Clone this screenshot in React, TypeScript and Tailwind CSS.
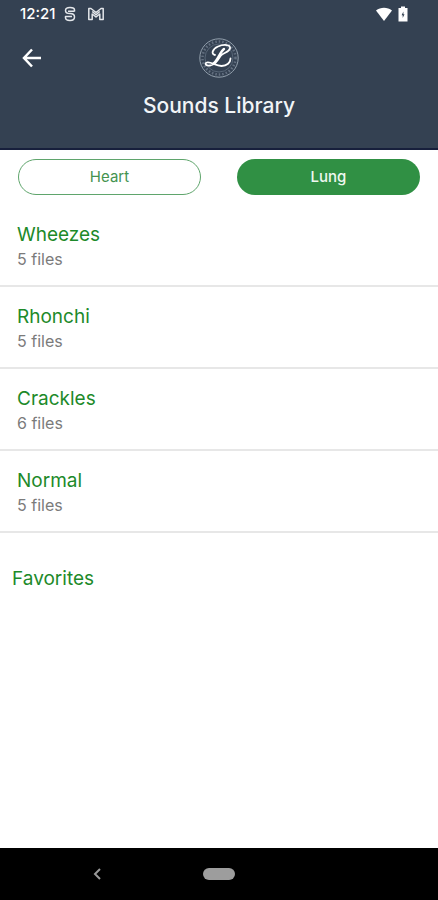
const categories = [
  { title: "Wheezes", files: 5 },
  { title: "Rhonchi", files: 5 },
  { title: "Crackles", files: 6 },
  { title: "Normal", files: 5 },
];

const StatusBar = () => (
  <div className="flex h-7 items-center pr-[30px] pl-5 text-white">
    <span className="text-[15px] font-medium">12:21</span>
    <svg
      className="ml-2 h-4 w-3"
      viewBox="0 0 12 16"
      fill="none"
      stroke="#e3e6ea"
      strokeWidth="1.5"
      strokeLinejoin="round"
    >
      <path d="M10.500 5.500V4C10.500 2.500 9 1.500 6 1.500S1.500 2.500 1.500 4.500C1.500 7 3 7.600 6 7.600S10.500 8.500 10.500 11C10.500 13.500 9 14.500 6 14.500S1.500 13.500 1.500 11.800V10.500H8M4 5.300H10.500" />
    </svg>
    <svg
      className="ml-3 h-4 w-4"
      viewBox="0 0 16 16"
      fill="none"
      stroke="#e3e6ea"
      strokeWidth="1.5"
      strokeLinejoin="round"
    >
      <path d="M.8 2.500H3L8 6.500L13 2.500H15.200V13.500H11.800V8L8 11L4.200 8V13.500H.8ZM4.200 5.500L8 8.700L11.800 5.500" />
    </svg>
    <svg className="ml-auto h-4 w-4" viewBox="0 0 16 16" fill="#fff">
      <path d="M8 15L0 4.500C4.500.8 11.500.8 16 4.500Z" />
    </svg>
    <svg className="ml-1.5 h-4 w-2.5" viewBox="0 0 10 16">
      <path d="M3 .5H7V2H9.500V15.500H.5V2H3Z" fill="#fff" />
      <path d="M5.400 5.500L3.600 9.300H4.700V12L6.500 8.200H5.400Z" fill="#344152" />
    </svg>
  </div>
);

const Logo = () => (
  <svg
    className="size-10"
    viewBox="0 0 40 40"
    fill="none"
    role="img"
    aria-label="Logo"
  >
    <circle cx="20" cy="20" r="19.200" stroke="#93a0ad" strokeWidth="1" />
    <circle
      cx="20"
      cy="20"
      r="16.500"
      stroke="#8390a0"
      strokeWidth="2.500"
      strokeDasharray="1.500 2"
      opacity=".6"
    />
    <circle cx="20" cy="20" r="14" stroke="#708091" strokeWidth=".6" />
    <path
      d="M16 17C12 16.500 13 11 19 8.500C25 6 32 6.500 31 10.500C30 14.500 24 14.500 21.500 18C18.500 22.500 16 27 11 27.500C7 28 5 25.500 8 24.500C12 23.500 16.500 28 22.500 28C28 28 31.500 24.500 31.500 20.500"
      stroke="#fff"
      strokeWidth="1.800"
      strokeLinecap="round"
    />
    <path
      d="M25 11C21 14 19 22 14.500 25.500"
      stroke="#fff"
      strokeWidth="2.400"
      strokeLinecap="round"
    />
  </svg>
);

const Header = () => (
  <header className="h-[150px] border-b-2 border-[#171f3c] bg-[#344152]">
    <StatusBar />
    <div className="grid grid-cols-3 items-center px-5 pt-2.5">
      <button type="button" aria-label="Back" className="size-6">
        <svg
          className="size-6"
          viewBox="0 0 24 24"
          fill="none"
          stroke="#fff"
          strokeWidth="2.500"
        >
          <path d="M21 12H4.500M12 3.500L4 12L12 20.500" />
        </svg>
      </button>
      <div className="flex justify-center">
        <Logo />
      </div>
    </div>
    <h1 className="mt-3.5 text-center text-[21px] leading-7 font-medium text-[#f1f4f7]">
      Sounds Library
    </h1>
  </header>
);

const Tabs = () => (
  <div className="grid grid-cols-2 gap-9 px-[18px] pt-[9px]">
    <button
      type="button"
      className="h-9 rounded-full border border-[#5fa56c] text-[15px] text-[#44934f]"
    >
      Heart
    </button>
    <button
      type="button"
      className="h-9 rounded-full bg-[#309044] text-[15px] font-medium text-[#eff8f0]"
    >
      Lung
    </button>
  </div>
);

export default function App() {
  return (
    <div className="flex min-h-screen flex-col bg-white font-['Inter',sans-serif]">
      <Header />
      <main className="flex-1">
        <Tabs />
        <ul className="mt-2.5">
          {categories.map(({ title, files }) => (
            <li
              key={title}
              className="h-[82px] border-b-2 border-[#e7e7e7] px-[17px] pt-4"
            >
              <h2 className="text-[19px] leading-7 text-[#1d8a2a]">{title}</h2>
              <p className="text-base leading-5 text-[#7b7b7b]">
                {files} files
              </p>
            </li>
          ))}
        </ul>
        <h2 className="mt-8 px-3 text-[19px] leading-7 text-[#1d8a2a]">
          Favorites
        </h2>
      </main>
      <nav className="grid h-[52px] grid-cols-3 items-center bg-black px-9">
        <button
          type="button"
          aria-label="System back"
          className="flex justify-center"
        >
          <svg
            className="h-3 w-2"
            viewBox="0 0 8 12"
            fill="none"
            stroke="#999"
            strokeWidth="2"
          >
            <path d="M7 1L2 6L7 11" />
          </svg>
        </button>
        <button
          type="button"
          aria-label="Home"
          className="h-3 w-8 justify-self-center rounded-full bg-[#9d9d9d]"
        />
      </nav>
    </div>
  );
}
